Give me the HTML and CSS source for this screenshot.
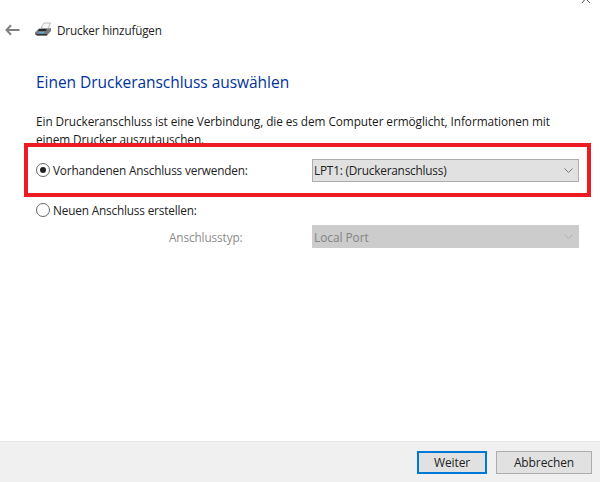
FILE: index.html
```html
<!DOCTYPE html>
<html lang="de">
<head>
<meta charset="utf-8">
<title>Drucker hinzufügen</title>
<link rel="stylesheet" href="styles.css">
</head>
<body>
<div class="window">
  <svg class="close-tip" width="14" height="4" viewBox="0 0 14 4"><path d="M5 3 7.5 0M10 0l3 3" stroke="#555" fill="none"/></svg>
  <header class="titlebar">
    <svg class="back" width="15" height="12" viewBox="0 0 15 12"><path d="M6 1.200 1.500 6 6 10.800M2 6h12.500" stroke="#808080" stroke-width="2" fill="none"/></svg>
    <svg class="printer" width="18" height="16" viewBox="0 0 18 16">
      <path d="M7 6 10 1h6.500L14 7z" fill="#f6f6f6" stroke="#a0a0a0" stroke-width=".7"/>
      <path d="M1 10.500 5 6.500h9l3-.5v3l-4 4.500H3L1 12z" fill="#777a7e"/>
      <path d="M5 7h8l-1.500 2H4z" fill="#26282c"/>
      <path d="M1 12h12v1.600H3z" fill="#35373b"/>
      <path d="M5 10h5v1.200H5z" fill="#5fb0e0"/>
    </svg>
    <span class="title">Drucker hinzufügen</span>
  </header>
  <main class="content">
    <h1 class="heading">Einen Druckeranschluss auswählen</h1>
    <p class="intro">Ein Druckeranschluss ist eine Verbindung, die es dem Computer ermöglicht, Informationen mit einem Drucker auszutauschen.</p>
    <div class="row row-existing">
      <label class="radio-label"><span class="radio checked"></span>Vorhandenen Anschluss verwenden:</label>
      <div class="select"><span>LPT1: (Druckeranschluss)</span><svg width="9" height="5" viewBox="0 0 9 5"><path d="M.5.500 4.500 4.500 8.500.500" stroke="#777" fill="none"/></svg></div>
    </div>
    <div class="row-new">
      <label class="radio-label"><span class="radio"></span>Neuen Anschluss erstellen:</label>
    </div>
    <div class="row row-type">
      <span class="type-label">Anschlusstyp:</span>
      <div class="select disabled"><span>Local Port</span><svg width="9" height="5" viewBox="0 0 9 5"><path d="M.5.500 4.500 4.500 8.500.500" stroke="#b0b0b0" fill="none"/></svg></div>
    </div>
  </main>
  <footer class="footer">
    <button class="btn primary">Weiter</button>
    <button class="btn">Abbrechen</button>
  </footer>
  <div class="highlight"></div>
</div>
</body>
</html>
```
FILE: styles.css
```css
* { box-sizing: border-box; }
html, body { margin: 0; padding: 0; }
body { background: #fff; font-family: "Open Sans", "Noto Sans", sans-serif; color: #1a1a1a; }
.window { position: relative; width: 600px; height: 482px; display: flex; flex-direction: column; overflow: hidden; }
.close-tip { position: absolute; left: 577px; top: 0; }
.titlebar { display: flex; align-items: center; height: 16px; margin-top: 22px; padding-left: 5px; }
.back { margin-right: 14px; }
.printer { margin-right: 5px; margin-top: -1px; }
.title { font-size: 11.7px; letter-spacing: -.16px; color: #222; }
.content { flex: 1; padding: 0 21px 0 36px; }
.heading { margin: 34px 0 0; font-size: 15.500px; line-height: 20px; font-weight: 400; color: #003399; letter-spacing: -.04px; }
.intro { margin: 20px 29px 0 0; font-size: 11.800px; line-height: 18px; letter-spacing: -.07px; color: #1a1a1a; }
.row { display: flex; align-items: center; justify-content: space-between; }
.row-existing { margin-top: 10px; height: 24px; }
.row-new { margin-top: 18px; height: 20px; display: flex; align-items: center; }
.row-type { margin-top: 5px; height: 23px; }
.radio-label { display: flex; align-items: center; font-size: 11.800px; letter-spacing: -.17px; color: #222; }
.radio { width: 14px; height: 14px; margin-right: 3px; border: 1px solid #666; border-radius: 50%; display: flex; align-items: center; justify-content: center; background: #fff; }
.radio.checked::before { content: ""; width: 6.500px; height: 6.500px; border-radius: 50%; background: #222; }
.select { width: 267px; height: 23px; padding: 0 5px 0 1px; display: flex; align-items: center; justify-content: space-between; background: #e1e1e1; border: 1px solid #adadad; font-size: 11.800px; letter-spacing: -.2px; color: #222; }
.select.disabled { background: #cccccc; border-color: #cccccc; color: #838383; letter-spacing: 0; }
.type-label { margin-left: 133px; font-size: 11.800px; letter-spacing: -.12px; color: #8c8c8c; }
.footer { height: 41px; display: flex; justify-content: flex-end; align-items: center; gap: 9px; padding: 0 8px 0 0; background: #f0f0f0; border-top: 1px solid #e6e6e6; }
.btn { width: 70px; height: 23px; padding: 0; background: #e1e1e1; border: 1px solid #adadad; font: inherit; font-size: 12px; letter-spacing: -.1px; color: #222; }
.btn.primary { border: 2px solid #0078d7; }
.btn:not(.primary) { width: 96px; }
.highlight { position: absolute; left: 24px; top: 143px; width: 567px; height: 54px; border: 4px solid #ed1c24; }
```
